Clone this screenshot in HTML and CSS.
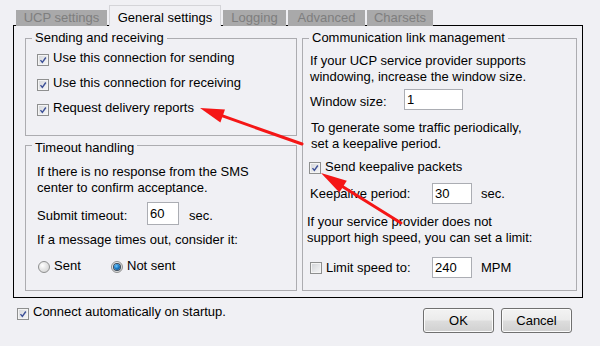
FILE: index.html
```html
<!DOCTYPE html>
<html>
<head>
<meta charset="utf-8">
<link rel="stylesheet" href="styles.css">
</head>
<body>
<div class="dialog">
  <div class="tabs">
    <div class="tab w-ucp">UCP settings</div>
    <div class="tab active w-gen">General settings</div>
    <div class="tab w-log">Logging</div>
    <div class="tab w-adv">Advanced</div>
    <div class="tab w-chr">Charsets</div>
  </div>
  <div class="panel">
    <div class="col-left">
      <fieldset class="group g-send">
        <legend>Sending and receiving</legend>
        <div class="send-body">
          <div class="check-row"><span class="cb"><svg viewBox="0 0 12 12"><path d="M3 6.2 L5.2 8.8 L9.4 3" /></svg></span><span>Use this connection for sending</span></div>
          <div class="check-row"><span class="cb"><svg viewBox="0 0 12 12"><path d="M3 6.2 L5.2 8.8 L9.4 3" /></svg></span><span>Use this connection for receiving</span></div>
          <div class="check-row"><span class="cb"><svg viewBox="0 0 12 12"><path d="M3 6.2 L5.2 8.8 L9.4 3" /></svg></span><span>Request delivery reports</span></div>
        </div>
      </fieldset>
      <fieldset class="group g-timeout">
        <legend class="lg-low">Timeout handling</legend>
        <div class="timeout-body">
          <p class="para">If there is no response from the SMS<br>center to confirm acceptance.</p>
          <div class="field-row fr-submit">
            <span class="lbl w-submit">Submit timeout:</span>
            <input class="txt in-submit" type="text" value="60">
            <span class="unit">sec.</span>
          </div>
          <p class="para p-msg">If a message times out, consider it:</p>
          <div class="radio-row">
            <span class="opt opt-sent"><span class="rb"></span>Sent</span>
            <span class="opt"><span class="rb on"></span>Not sent</span>
          </div>
        </div>
      </fieldset>
    </div>
    <fieldset class="group g-link">
      <legend>Communication link management</legend>
      <div class="link-body">
        <p class="para">If your UCP service provider supports<br>windowing, increase the window size.</p>
        <div class="field-row fr-window">
          <span class="lbl lbl-low w-window">Window size:</span>
          <input class="txt in-window" type="text" value="1">
        </div>
        <p class="para p-traffic">To generate some traffic periodically,<br>set a keepalive period.</p>
        <div class="check-row cr-keep"><span class="cb"><svg viewBox="0 0 12 12"><path d="M3 6.2 L5.2 8.8 L9.4 3" /></svg></span><span>Send keepalive packets</span></div>
        <div class="field-row fr-keep">
          <span class="lbl w-keep">Keepalive period:</span>
          <input class="txt in-small" type="text" value="30">
          <span class="unit">sec.</span>
        </div>
        <p class="para p-speed">If your service provider does not<br>support high speed, you can set a limit:</p>
        <div class="field-row fr-limit">
          <span class="lbl w-keep lbl-check"><span class="cb off"></span><span>Limit speed to:</span></span>
          <input class="txt in-small" type="text" value="240">
          <span class="unit">MPM</span>
        </div>
      </div>
    </fieldset>
  </div>
  <div class="footer">
    <div class="check-row cr-auto"><span class="cb"><svg viewBox="0 0 12 12"><path d="M3 6.2 L5.2 8.8 L9.4 3" /></svg></span><span>Connect automatically on startup.</span></div>
    <div class="buttons">
      <button class="btn" type="button">OK</button>
      <button class="btn" type="button">Cancel</button>
    </div>
  </div>
</div>
<svg class="arrows" viewBox="0 0 600 346" width="600" height="346">
  <line x1="219" y1="114.7" x2="302" y2="144" />
  <polygon points="200,108 220.4,122.6 225,109.4" />
  <line x1="340" y1="185" x2="401" y2="223" />
  <polygon points="321,173 339.4,192.6 346.8,180.8" />
</svg>
</body>
</html>
```

FILE: styles.css
```css
* { box-sizing: border-box; }

body {
  margin: 0;
  width: 600px;
  height: 346px;
  overflow: hidden;
  position: relative;
  background: #f0f0f4;
  font-family: "Liberation Sans", Arial, sans-serif;
  font-size: 13px;
  color: #000;
}

/* Tabs */
.tabs {
  display: flex;
  align-items: flex-end;
  gap: 2px;
  height: 26px;
  padding-left: 16px;
  margin-bottom: -1px;
  position: relative;
  z-index: 1;
}
.tab {
  height: 16px;
  line-height: 15px;
  background: #a9a9aa;
  color: #7e7e7e;
  text-align: center;
  white-space: nowrap;
}
.tab.active {
  height: 21px;
  padding-top: 4px;
  background: #f0f0f4;
  color: #000;
  border: 1px solid #d4d4d8;
  border-bottom: none;
}
.w-ucp { width: 91px; }
.w-gen { width: 112px; }
.w-log { width: 63px; }
.w-adv { width: 77px; }
.w-chr { width: 66px; }

/* Panel */
.panel {
  margin-left: 13px;
  width: 570px;
  height: 273px;
  border: 1px solid #000;
  padding: 5px 5px 0 11px;
  display: flex;
  align-items: flex-start;
  gap: 5px;
}
.col-left {
  width: 272px;
  display: flex;
  flex-direction: column;
}

.group {
  margin: 0;
  padding: 0;
  border: 1px solid #acacb0;
  min-width: 0;
}
.group legend {
  margin-left: 6px;
  padding: 0 3px;
  line-height: 14px;
  white-space: nowrap;
}
.group legend.lg-low { padding-top: 5px; }

.g-send { height: 105px; }
.g-timeout { height: 155px; }
.g-link { width: 275px; height: 260px; }

.send-body { padding-left: 11px; }
.timeout-body { padding: 9px 0 0 11px; }
.link-body { padding: 8px 0 0 7px; }

.para {
  margin: 0;
  line-height: 16px;
  white-space: nowrap;
}

/* Checkbox */
.check-row {
  display: flex;
  align-items: center;
  height: 25px;
  white-space: nowrap;
}
.cb {
  flex: none;
  width: 12px;
  height: 12px;
  margin-right: 4px;
  margin-top: 5px;
  border: 1px solid #8e8f8f;
  background: linear-gradient(135deg, #d2d4d8 0%, #e8e9eb 55%, #f7f7f7 100%);
  box-shadow: inset 0 0 0 1px #f4f4f4;
  display: block;
}
.cb svg {
  display: block;
  width: 10px;
  height: 10px;
}
.cb path {
  fill: none;
  stroke: #3c4f96;
  stroke-width: 1.7;
}

/* Fields */
.field-row {
  display: flex;
  align-items: center;
  white-space: nowrap;
}
.lbl { flex: none; line-height: 15px; }
.lbl-low { margin-top: 4px; }
.w-submit { width: 110px; margin-top: 4px; }
.w-window { width: 94px; }
.w-keep { width: 122px; }
.txt {
  flex: none;
  font: inherit;
  color: #000;
  background: #fff;
  border: 1px solid #abadb3;
  padding: 0 2px;
  margin: 0;
  height: 21px;
  line-height: 15px;
  outline: none;
}
.in-submit { width: 32px; height: 23px; }
.in-window { width: 59px; }
.in-small { width: 40px; }
.unit { margin-left: 9px; }
.fr-submit .unit { margin-left: 10px; margin-top: 4px; }

.fr-submit { margin-top: 6px; }
.p-msg { margin-top: 7px; }

/* Radios */
.radio-row {
  display: flex;
  align-items: center;
  height: 15px;
  margin-top: 10px;
  padding-left: 1px;
  line-height: 15px;
}
.opt { display: flex; align-items: center; }
.opt-sent { width: 73px; }
.rb {
  width: 12px;
  height: 12px;
  margin-right: 4px;
  margin-top: 3px;
  border: 1px solid #8e8f8f;
  border-radius: 50%;
  background: radial-gradient(circle at 35% 35%, #ffffff 0%, #e6e6e6 45%, #cfcfcf 100%);
  position: relative;
  display: flex;
  align-items: center;
  justify-content: center;
}
.rb.on::after {
  content: "";
  width: 6px;
  height: 6px;
  border-radius: 50%;
  background: radial-gradient(circle at 40% 35%, #6fc8ff 0%, #1d7dc7 45%, #0b3f74 100%);
  box-shadow: 0 0 0 1px #3b4b5b;
}

/* Right group rows */
.fr-window { margin-top: 4px; }
.p-traffic { margin-top: 10px; padding-left: 1px; }
.cr-keep { height: 15px; margin-top: 7px; margin-left: -1px; }
.cr-keep .cb { margin-top: 3px; }
.fr-keep { margin-top: 9px; }
.p-speed { margin-top: 10px; margin-left: -3px; }
.fr-limit { margin-top: 11px; }
.lbl-check { display: flex; align-items: center; }
.lbl-check .cb { margin-top: 1px; }
.cb.off { background: linear-gradient(135deg, #cfd1d5 0%, #e6e7e9 55%, #f6f6f6 100%); }

/* Footer */
.footer {
  display: flex;
  justify-content: space-between;
  align-items: flex-start;
  margin-top: 6px;
  padding: 0 28px 0 17px;
}
.cr-auto {
  height: 15px;
  align-items: flex-start;
  line-height: 15px;
}
.cr-auto .cb { margin-top: 4px; }
.buttons {
  display: flex;
  gap: 7px;
  margin-top: 4px;
}
.btn {
  width: 71px;
  height: 25px;
  padding: 0;
  font: inherit;
  color: #000;
  border: 1px solid #707070;
  border-radius: 3px;
  background: linear-gradient(#f3f3f3 0%, #ebebeb 48%, #dddddd 52%, #d0d0d0 100%);
  box-shadow: inset 0 0 0 1px #fbfbfb;
}

/* Annotation arrows */
.arrows {
  position: absolute;
  left: 0;
  top: 0;
  pointer-events: none;
}
.arrows line {
  stroke: #f51616;
  stroke-width: 3;
  stroke-linecap: round;
}
.arrows polygon {
  fill: #f51616;
}
```
